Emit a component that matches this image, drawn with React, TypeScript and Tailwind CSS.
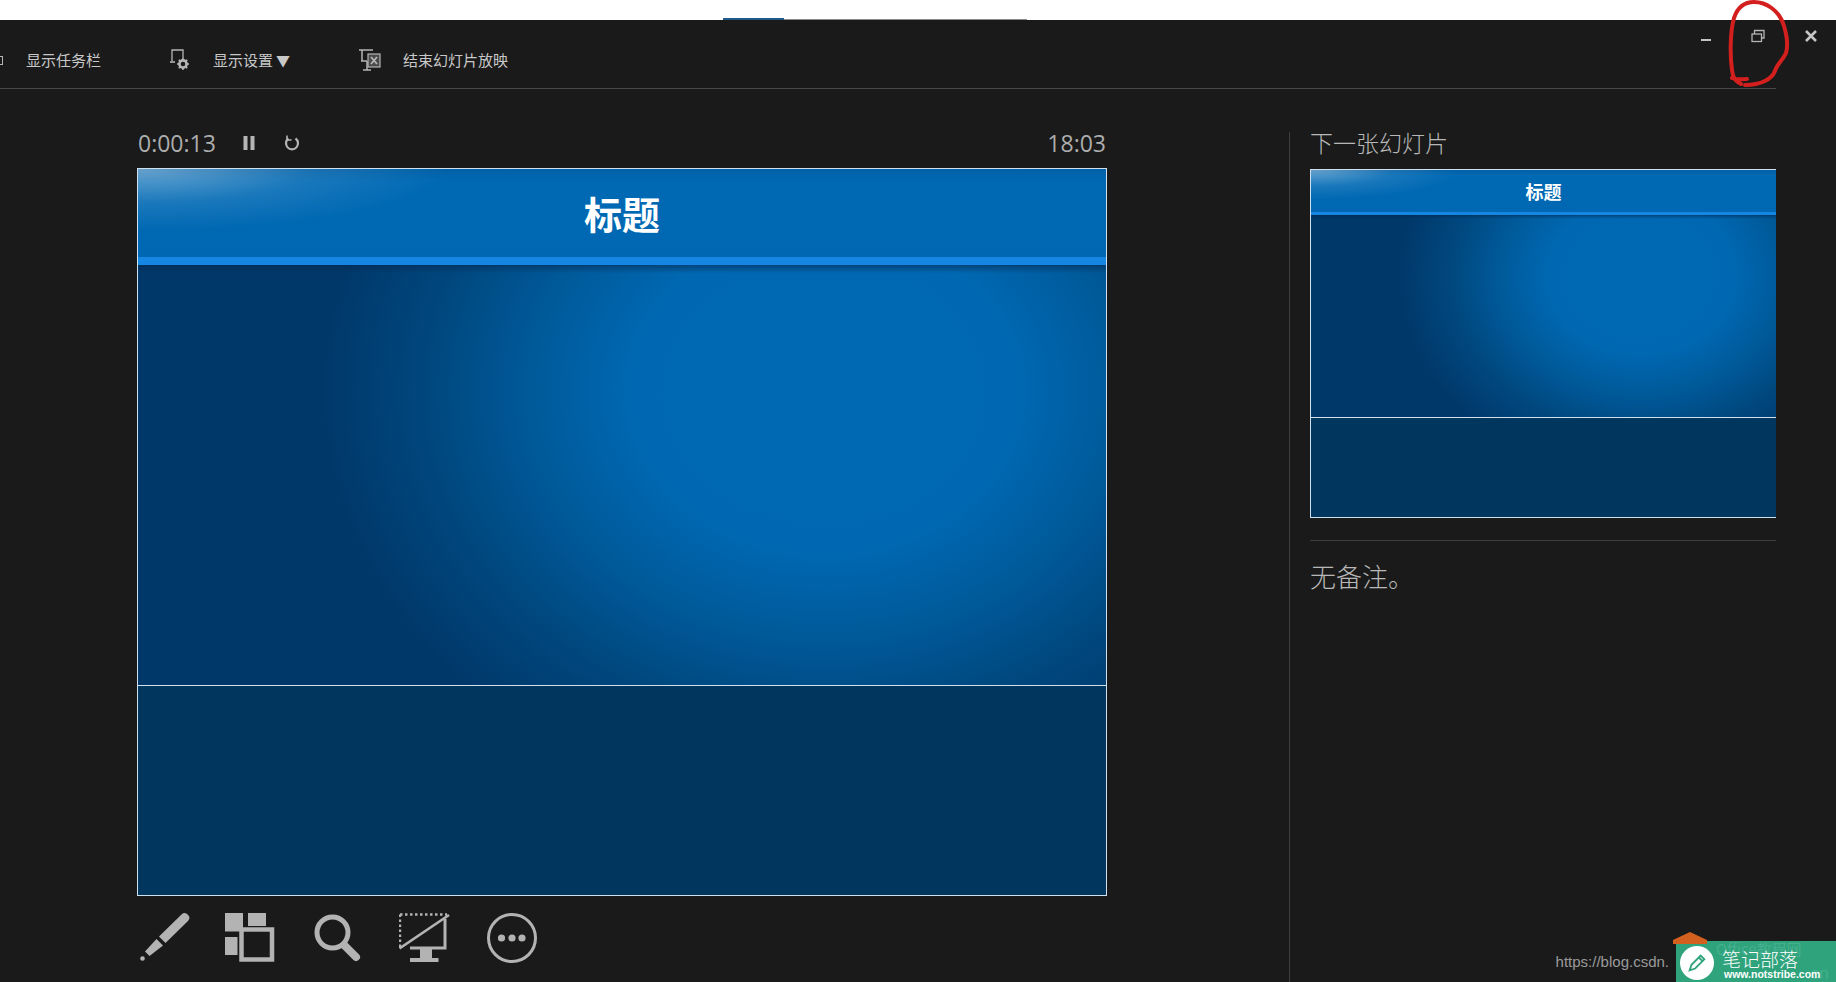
import type { ReactNode } from 'react'

const cjk = "font-['Noto_Sans_CJK_SC','Noto_Sans',sans-serif]"

function Slide({
  frame,
  header,
  stripe,
  body,
  panel,
  titleClass,
}: {
  frame: string
  header: string
  stripe: string
  body: string
  panel: string
  titleClass: string
}) {
  return (
    <div className={`flex flex-col border-t border-l border-[#cfe1ef] bg-[#01365f] ${frame}`}>
      <div
        className={`flex items-center justify-center bg-[radial-gradient(ellipse_32%_70%_at_0%_0%,rgba(255,255,255,0.4),rgba(255,255,255,0.1)_55%,transparent_100%),linear-gradient(180deg,#0260a6_0%,#0069b4_14%,#0068b2_100%)] ${header}`}
      >
        <span className={`font-bold text-white ${cjk} ${titleClass}`}>标题</span>
      </div>
      <div className={`bg-[#1587e2] ${stripe}`} />
      <div
        className={`bg-[linear-gradient(180deg,rgba(0,40,80,0.55)_0%,transparent_2%),radial-gradient(ellipse_52%_100%_at_71%_30%,#0069b4_0%,#0068b2_38%,#005a9a_58%,#00487f_78%,#01386a_100%)] ${body}`}
      />
      <div className={`border-t border-b border-[#cfe1ef] bg-[#01365f] ${panel}`} />
    </div>
  )
}

function ToolbarIcon({ children, className }: { children: ReactNode; className: string }) {
  return (
    <svg viewBox="0 0 24 24" className={`h-[24px] w-[24px] shrink-0 ${className}`} fill="none" stroke="#b5b5b5">
      {children}
    </svg>
  )
}

function BottomIcon({ children }: { children: ReactNode }) {
  return (
    <svg viewBox="0 0 52 52" className="h-[52px] w-[52px] shrink-0" fill="#b3b3b3" stroke="none">
      {children}
    </svg>
  )
}

export default function App() {
  return (
    <div className={`relative h-[982px] w-full overflow-hidden bg-[#1a1a1a] ${cjk}`}>
      <div className="flex h-[20px] items-end bg-white pl-[723px]">
        <div className="h-[2px] w-[61px] bg-[#1e5a8c]" />
        <div className="h-px w-[243px] bg-[#8a8a8a]" />
      </div>

      <div className="flex h-[68px] items-start">
        <div className="mt-[28px] flex items-center text-[15px] leading-[22px] text-[#c8c8c8]">
          <div className="h-[9px] w-[3px] border-y border-r border-[#b5b5b5]" />
          <span className="ml-[23px]">显示任务栏</span>
          <ToolbarIcon className="ml-[68px]">
            <path d="M3 13V2h11v8" strokeWidth="1.3" />
            <path d="M1 14h5" strokeWidth="1.6" />
            <circle cx="14" cy="16" r="3.6" strokeWidth="2.6" />
            <path d="M14 10v2.4M14 19.6V22M8 16h2.4M17.6 16H20M9.8 11.8l1.6 1.6M16.6 18.6l1.6 1.6M9.8 20.2l1.6-1.6M16.6 13.4l1.6-1.6" strokeWidth="1.6" />
          </ToolbarIcon>
          <span className="ml-[20px]">显示设置</span>
          <span className="ml-[3px] text-[14px]">▼</span>
          <ToolbarIcon className="ml-[69px]">
            <path d="M0 2h14M3 2v11M2 13h6M8 13v9M4 22h8" strokeWidth="1.5" />
            <rect x="9" y="6" width="12" height="13" fill="#4a4a4a" strokeWidth="1.2" />
            <path d="M12 9l6 7M18 9l-6 7" strokeWidth="1.8" />
          </ToolbarIcon>
          <span className="ml-[20px]">结束幻灯片放映</span>
        </div>
        <div className="ml-auto mt-[9px] flex items-center pr-[18px]">
          <div className="mt-[8px] h-[2px] w-[10px] bg-[#c4c4c4]" />
          <svg viewBox="0 0 14 14" className="ml-[40px] h-[14px] w-[14px]" fill="none" stroke="#b5b5b5" strokeWidth="1.3">
            <rect x="1" y="5" width="9.5" height="7.5" />
            <path d="M3.5 5V1.5H13V9h-2.5" />
          </svg>
          <svg viewBox="0 0 14 14" className="ml-[39px] h-[14px] w-[14px]" fill="none" stroke="#c6c6c6" strokeWidth="2.6">
            <path d="M2 2l10 10M12 2L2 12" />
          </svg>
        </div>
      </div>
      <div className="h-px w-[1776px] bg-[#4a4a4a]" />

      <div className="flex h-[893px]">
        <div className="w-[1289px] shrink-0 pl-[137px]">
          <div className="flex h-[79px] w-[970px] items-start pt-[40px] text-[#adadad]">
            <span className="ml-[1px] font-['Open_Sans',sans-serif] text-[23px] leading-[28px]">0:00:13</span>
            <svg viewBox="0 0 14 16" className="mt-[6px] ml-[26px] h-[16px] w-[14px]" fill="#b5b5b5">
              <rect x="1.5" y="1" width="4" height="14" />
              <rect x="8.5" y="1" width="4" height="14" />
            </svg>
            <svg viewBox="0 0 18 18" className="mt-[5px] ml-[27px] h-[18px] w-[18px]" fill="none" stroke="#b5b5b5" strokeWidth="2.2">
              <path d="M5.5 4.5a6 6 0 1 0 7 0" />
              <path d="M4 1.5v4.5h4.5" strokeWidth="1.6" />
            </svg>
            <span className="mr-[1px] ml-auto font-['Open_Sans',sans-serif] text-[23px] leading-[28px]">18:03</span>
          </div>

          <Slide
            frame="w-[970px] border-r"
            header="h-[88px]"
            stripe="h-[8px]"
            body="h-[420px]"
            panel="h-[211px]"
            titleClass="text-[38px] leading-[44px]"
          />

          <div className="mt-[16px] flex w-[970px] gap-[35px] pl-[1px]">
            <BottomIcon>
              <path d="M43.5 2.5a4.6 4.6 0 0 1 6.5 6.5L27.5 31 21 24.5Z" />
              <path d="M18.5 27l6.5 6.5-13.5 10.5-4.5-4.5Z" />
              <circle cx="4.5" cy="46.5" r="2.3" />
            </BottomIcon>
            <BottomIcon>
              <rect x="0" y="1" width="18" height="18.5" />
              <rect x="23" y="1" width="18" height="13" />
              <rect x="0" y="25" width="12.5" height="18" />
              <rect x="16.5" y="17.5" width="30.5" height="30" fill="none" stroke="#b3b3b3" strokeWidth="4.5" />
            </BottomIcon>
            <BottomIcon>
              <circle cx="20.5" cy="20.5" r="15.5" fill="none" stroke="#b3b3b3" strokeWidth="5" />
              <path d="M33 34l11 11" fill="none" stroke="#b3b3b3" strokeWidth="8" strokeLinecap="round" />
            </BottomIcon>
            <BottomIcon>
              <path d="M1 2.5h47M1 2.5V35" fill="none" stroke="#b3b3b3" strokeWidth="2.4" strokeDasharray="2.5 2.5" />
              <path d="M0.5 36.5L50 3" fill="none" stroke="#b3b3b3" strokeWidth="2.6" />
              <path d="M46 7v29H11" fill="none" stroke="#b3b3b3" strokeWidth="3" />
              <path d="M21 37h12v9h6.5v4H11v-4h10Z" />
            </BottomIcon>
            <BottomIcon>
              <circle cx="26" cy="26" r="23.5" fill="none" stroke="#b3b3b3" strokeWidth="3" />
              <circle cx="15.5" cy="26" r="3.6" />
              <circle cx="26" cy="26" r="3.6" />
              <circle cx="36" cy="26" r="3.6" />
            </BottomIcon>
          </div>
        </div>

        <div className="mt-[43px] w-[487px] border-l border-[#3e3e3e] pl-[20px]">
          <div className="-mt-[1px] h-[38px] text-[23px] leading-[23px] font-light text-[#b8b8b8]">下一张幻灯片</div>
          <Slide
            frame="w-[466px]"
            header="h-[42px]"
            stripe="h-[3px]"
            body="h-[202px]"
            panel="h-[101px]"
            titleClass="text-[18px] leading-[24px]"
          />
          <div className="mt-[22px] h-px bg-[#3e3e3e]" />
          <div className="mt-[18px] text-[26px] leading-[34px] font-light text-[#b8b8b8]">无备注。</div>
        </div>
      </div>

      {/* red ellipse scribbled over the restore button */}
      <svg viewBox="0 0 80 90" className="absolute top-0 left-[1720px] h-[90px] w-[80px]" fill="none" stroke="#d3201f" strokeWidth="4" strokeLinecap="round">
        <path d="M21 84c-6-3-8-6-9-14-2-14-2-38 2-52 3-9 9-16 20-16 12 0 25 8 30 24 3 10 4 20 2 27-3 7-9 11-11 18-3 8-14 14-30 14M12 78c4 2 9 1 15 1" />
      </svg>

      {/* csdn + site watermark */}
      <div className="absolute right-0 bottom-0 flex h-[49px] items-end">
        <span className="mr-[7px] mb-[10px] font-['Liberation_Sans',sans-serif] text-[15px] leading-[20px] whitespace-nowrap text-[#9a9a9a]">
          https://blog.csdn.
        </span>
        <div className="relative h-[41px] w-[160px] bg-[#2fa37b]">
          <svg viewBox="0 0 36 12" className="absolute -top-[9px] -left-[3px] h-[12px] w-[36px]" fill="#d4601f">
            <path d="M0 12V8L17 0l17 8v4Z" />
          </svg>
          <span className="absolute top-[0px] left-[40px] text-[15px] leading-[15px] whitespace-nowrap text-[#45b08f]">Office教程网</span>
          <span className="absolute top-[24px] left-[130px] font-['Liberation_Sans',sans-serif] text-[17px] leading-[17px] text-[#45b08f]">.cn</span>
          <div className="absolute top-[5px] left-[4px] flex h-[34px] w-[34px] items-center justify-center rounded-full bg-white">
            <svg viewBox="0 0 24 24" className="h-[22px] w-[22px]" fill="none" stroke="#2fa37b" strokeWidth="2">
              <path d="M4 20l2-6L16 4l4 4-10 10Z" />
              <path d="M14 6l4 4" />
            </svg>
          </div>
          <span className="absolute top-[0px] left-[46px] text-[19px] leading-[36px] font-light text-white">笔记部落</span>
          <span className="absolute top-[26px] left-[48px] font-['Liberation_Sans',sans-serif] text-[10.5px] leading-[14px] font-bold text-white">
            www.notstribe.com
          </span>
        </div>
      </div>
    </div>
  )
}
